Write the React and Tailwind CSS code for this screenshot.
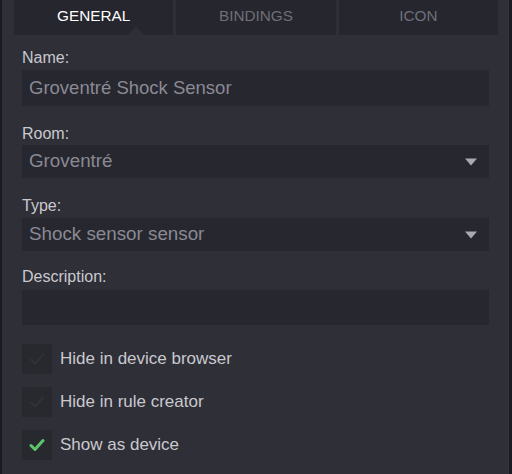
import { useState } from "react";

const tabs = ["GENERAL", "BINDINGS", "ICON"];

const Caret = () => (
  <svg width="12" height="8" viewBox="0 0 12 8" className="absolute right-[12px] top-1/2 -translate-y-1/2">
    <path d="M0 0.5 L12 0.5 L6 7.5 Z" fill="#a9a9b0" />
  </svg>
);

const Check = ({ on }) => (
  <svg width="16" height="14" viewBox="0 0 16 14">
    <path
      d="M2 7.5 L6 11.5 L14 2.5"
      fill="none"
      stroke={on ? "#5cc46a" : "#31313a"}
      strokeWidth={on ? "3" : "2"}
      strokeLinecap="round"
      strokeLinejoin="round"
    />
  </svg>
);

const Label = ({ children, className }) => (
  <div className={"text-[16px] leading-[18px] text-[#c9c9ce] " + className}>{children}</div>
);

const App = () => {
  const [active, setActive] = useState(0);
  const [checks, setChecks] = useState([false, false, true]);

  const toggle = (i) => setChecks(checks.map((c, j) => (j === i ? !c : c)));

  return (
    <div
      className="w-[512px] h-[474px] bg-[#1a1a1f] flex overflow-hidden"
      style={{ fontFamily: '"Liberation Sans", Arial, sans-serif' }}
    >
      <div className="ml-[2px] w-[507px] h-full bg-[#2f2f38] border-r border-[#34343d]">
        <div className="flex gap-[3px] ml-[12px] w-[484px] h-[35px]">
          {tabs.map((t, i) => (
            <button
              key={t}
              onClick={() => setActive(i)}
              className={
                "relative flex-1 bg-[#26262e] text-[15.3px] " +
                (active === i ? "text-white" : "text-[#6f6f78]")
              }
            >
              <span className="relative -top-[1px]">{t}</span>
              {active === i && (
                <span className="absolute bottom-0 left-[114px] w-0 h-0 border-l-[8px] border-r-[8px] border-b-[8px] border-l-transparent border-r-transparent border-b-[#2f2f38]" />
              )}
            </button>
          ))}
        </div>

        <div className="pl-[20px] pr-[19px] pt-[14px]">
          <Label className="mb-[3px]">Name:</Label>
          <div className="h-[36px] bg-[#27272f] flex items-center px-[7px] text-[18.5px] text-[#8a8a94]">
            Groventré Shock Sensor
          </div>

          <Label className="mt-[19px] mb-[2px]">Room:</Label>
          <div className="relative h-[33px] bg-[#27272f] flex items-center px-[7px] text-[18.8px] text-[#8a8a94]">
            Groventré
            <Caret />
          </div>

          <Label className="mt-[19px] mb-[3px]">Type:</Label>
          <div className="relative h-[33px] bg-[#27272f] flex items-center px-[7px] text-[18.8px] text-[#8a8a94]">
            Shock sensor sensor
            <Caret />
          </div>

          <Label className="mt-[17px] mb-[4px]">Description:</Label>
          <div className="h-[35px] bg-[#27272f]" />

          <div className="flex flex-col gap-[13px] pt-[19px]">
            {["Hide in device browser", "Hide in rule creator", "Show as device"].map((l, i) => (
              <label key={l} className="flex items-center gap-[8px] cursor-pointer" onClick={() => toggle(i)}>
                <span className="w-[30px] h-[30px] bg-[#28282f] flex items-center justify-center">
                  <Check on={checks[i]} />
                </span>
                <span className="text-[17px] text-[#c9c9ce]">{l}</span>
              </label>
            ))}
          </div>
        </div>
      </div>
    </div>
  );
};

export default App;
